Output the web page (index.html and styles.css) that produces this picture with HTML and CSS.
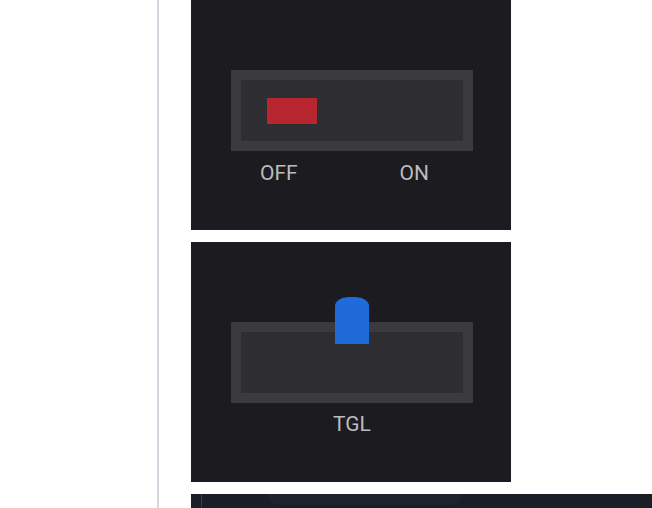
FILE: index.html
```html
<!DOCTYPE html>
<html lang="en">
<head>
<meta charset="utf-8">
<title>Switch widgets</title>
<link rel="stylesheet" href="styles.css">
</head>
<body>
<div class="layout">
  <aside class="sidebar"></aside>
  <main class="content">
    <section class="panel panel-first">
      <div class="switch">
        <div class="switch-track">
          <div class="switch-lever"></div>
        </div>
      </div>
      <div class="switch-labels">
        <span>OFF</span>
        <span>ON</span>
      </div>
    </section>

    <section class="panel panel-toggle">
      <div class="switch switch-push">
        <div class="switch-track"></div>
        <div class="push-knob"></div>
      </div>
      <div class="switch-caption">TGL</div>
    </section>

    <section class="panel-dark">
      <div class="dark-rule"></div>
      <div class="dark-pill"></div>
    </section>
  </main>
</div>
</body>
</html>
```

FILE: styles.css
```css
html, body {
  margin: 0;
  padding: 0;
  background: #ffffff;
  height: 100%;
  overflow: hidden;
  font-family: Roboto, "Liberation Sans", sans-serif;
}

.layout {
  display: flex;
  height: 508px;
}

.sidebar {
  width: 157px;
  flex: 0 0 157px;
  border-right: 2px solid #d2d9e0;
}

.content {
  flex: 1;
  padding-left: 32px;
  display: flex;
  flex-direction: column;
  gap: 12px;
  overflow: hidden;
}

.panel {
  width: 320px;
  background: #1c1b20;
  box-sizing: border-box;
  padding: 0 38px 0 40px;
  flex: 0 0 auto;
}

.panel-first {
  height: 230px;
  padding-top: 70px;
}

.panel-toggle {
  height: 240px;
  padding-top: 80px;
}

.switch {
  position: relative;
  width: 242px;
  height: 81px;
  box-sizing: border-box;
  border: 10px solid #3b3a3f;
  background: #2e2d32;
}

.switch-track {
  height: 100%;
  display: flex;
  align-items: center;
  padding-left: 26px;
}

.switch-lever {
  width: 50px;
  height: 26px;
  background: #b7252e;
}

.switch-labels {
  width: 242px;
  display: flex;
  justify-content: space-between;
  box-sizing: border-box;
  padding: 0 44px 0 29px;
  margin-top: 12px;
  font-size: 21px;
  line-height: 20px;
  color: #bcbcbe;
}

.push-knob {
  position: absolute;
  left: 94px;
  top: -35px;
  width: 34px;
  height: 47px;
  background: #1e6bd9;
  border-radius: 13px 13px 1px 1px / 9px 9px 1px 1px;
}

.switch-caption {
  width: 242px;
  text-align: center;
  margin-top: 11px;
  font-size: 21px;
  line-height: 20px;
  color: #bcbcbe;
}

.panel-dark {
  position: relative;
  flex: 0 0 40px;
  width: 461px;
  background: #1b1e26;
  overflow: hidden;
}

.dark-rule {
  position: absolute;
  left: 10px;
  top: 0;
  bottom: 0;
  width: 1px;
  background: #3a3d46;
}

.dark-pill {
  position: absolute;
  left: 77px;
  top: -12px;
  width: 194px;
  height: 23px;
  border-radius: 12px;
  background: #20232c;
}
```
